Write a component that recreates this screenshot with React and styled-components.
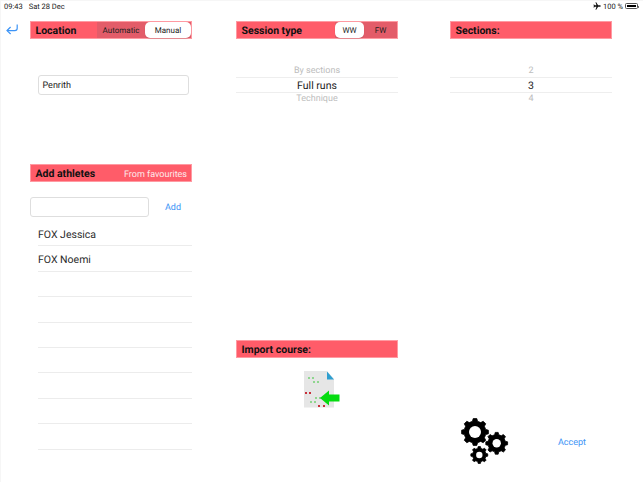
import React from "react";
import styled, { createGlobalStyle } from "styled-components";

const GlobalStyle = createGlobalStyle`
  html, body {
    margin: 0;
    padding: 0;
    background: #ffffff;
  }
  * {
    box-sizing: border-box;
  }
`;

const athletes = ["FOX Jessica", "FOX Noemi", "", "", "", "", "", "", ""];

const greenDots = [[4, 6], [8, 6], [9, 10], [13, 10], [11, 26], [15, 26], [6, 30], [10, 30]];
const redDots = [[1, 21], [5, 21], [14, 34], [19, 34]];

// teeth are computed, so the three gears can share one drawing
function gearPath(cx, cy, outer, inner, teeth) {
  const step = (Math.PI * 2) / teeth;
  let d = "";
  for (let i = 0; i < teeth; i++) {
    const a = i * step - Math.PI / 2;
    const pts = [
      [inner, a - step * 0.3],
      [outer, a - step * 0.17],
      [outer, a + step * 0.17],
      [inner, a + step * 0.3],
    ];
    pts.forEach(([r, t], j) => {
      const x = (cx + r * Math.cos(t)).toFixed(2);
      const y = (cy + r * Math.sin(t)).toFixed(2);
      d += (i === 0 && j === 0 ? "M" : "L") + x + " " + y + " ";
    });
  }
  return d + "Z";
}

function Gear({ cx, cy, outer, inner, hole }) {
  return (
    <>
      <path d={gearPath(cx, cy, outer, inner, 8)} fill="#000" stroke="#000" strokeWidth="0.8" strokeLinejoin="round" />
      <circle cx={cx} cy={cy} r={hole} fill="#fff" />
    </>
  );
}

function Gears() {
  return (
    <GearsSvg width="50" height="50" viewBox="0 0 50 50">
      <Gear cx={15} cy={15} outer={13.5} inner={11} hole={6} />
      <Gear cx={36.7} cy={26.3} outer={11} inner={8.8} hole={4.2} />
      <Gear cx={19.3} cy={38} outer={8.5} inner={6.8} hole={3.2} />
    </GearsSvg>
  );
}

function FileImport() {
  return (
    <svg width="36" height="38" viewBox="0 0 36 38">
      <path d="M0 0H23L30 8V36.5H0Z" fill="#e6e6e6" />
      <path d="M23 0.5L30 8.5H23Z" fill="#2f9fd0" />
      {greenDots.map(([x, y]) => (
        <rect key={x + "-" + y} x={x} y={y} width="2" height="2" fill="#8fd68f" />
      ))}
      {redDots.map(([x, y]) => (
        <rect key={x + "-" + y} x={x} y={y} width="2" height="2" fill="#c8303a" />
      ))}
      <path d="M16 27L25 19.5V23.5H35.5V30.5H25V34.5Z" fill="#05dc10" />
    </svg>
  );
}

function BackArrow() {
  return (
    <svg width="12" height="11" viewBox="0 0 12 11" fill="none" stroke="#3d94f6" strokeWidth="1.2">
      <path d="M11.2 0.5V4.2C11.2 5.8 10.2 6.6 8.8 6.6H1.2" />
      <path d="M4.6 3L1 6.6L4.6 10" />
    </svg>
  );
}

function Plane() {
  return (
    <svg width="8" height="8" viewBox="0 0 10 10">
      <path d="M9.8 5C9.8 4.5 9.2 4.2 8.7 4.2H6.4L4 .4H3.1L4.3 4.2H2.3L1.4 3.1H.6L1.1 5L.6 6.9H1.4L2.3 5.8H4.3L3.1 9.6H4L6.4 5.8H8.7C9.2 5.8 9.8 5.5 9.8 5Z" fill="#111" />
    </svg>
  );
}

export default function App() {
  return (
    <>
      <GlobalStyle />
      <Screen>
        <StatusBar>
          <StatusGroup>
            <span>09:43</span>
            <span>Sat 28 Dec</span>
          </StatusGroup>
          <StatusGroup>
            <Plane />
            <span>100 %</span>
            <Battery>
              <BatteryFill />
            </Battery>
          </StatusGroup>
        </StatusBar>

        <BackButton>
          <BackArrow />
        </BackButton>

        <Columns>
          <Column>
            <HeaderBar>
              <HeaderTitle>Location</HeaderTitle>
              <Segments>
                <Segment $width="48px">Automatic</Segment>
                <Segment $width="46px" $selected>Manual</Segment>
              </Segments>
            </HeaderBar>
            <LocationBox>Penrith</LocationBox>

            <AthletesBar>
              <HeaderTitle>Add athletes</HeaderTitle>
              <Favourites>From favourites</Favourites>
            </AthletesBar>
            <AddRow>
              <AthleteInput />
              <LinkText>Add</LinkText>
            </AddRow>
            <AthleteList>
              {athletes.map((name, i) => (
                <AthleteRow key={i}>{name}</AthleteRow>
              ))}
            </AthleteList>
          </Column>

          <Column>
            <HeaderBar>
              <HeaderTitle>Session type</HeaderTitle>
              <Segments>
                <Segment $width="29px" $selected>WW</Segment>
                <Segment $width="33px">FW</Segment>
              </Segments>
            </HeaderBar>
            <Picker>
              <PickerFaded>By sections</PickerFaded>
              <PickerCurrent>Full runs</PickerCurrent>
              <PickerFaded>Technique</PickerFaded>
            </Picker>
            <ImportBlock>
              <HeaderBar>
                <HeaderTitle>Import course:</HeaderTitle>
              </HeaderBar>
              <ImportIcon>
                <FileImport />
              </ImportIcon>
            </ImportBlock>
          </Column>

          <Column>
            <HeaderBar>
              <HeaderTitle>Sections:</HeaderTitle>
            </HeaderBar>
            <Picker>
              <PickerFaded>2</PickerFaded>
              <PickerCurrent>3</PickerCurrent>
              <PickerFaded>4</PickerFaded>
            </Picker>
            <Actions>
              <Gears />
              <LinkText>Accept</LinkText>
            </Actions>
          </Column>
        </Columns>
      </Screen>
    </>
  );
}

const Screen = styled.div`
  position: relative;
  width: 643px;
  height: 482px;
  overflow: hidden;
  background: #ffffff;
  box-shadow: inset 1px 1px 0 #f6f6f6;
  font-family: Roboto, "Liberation Sans", sans-serif;
  text-rendering: geometricPrecision;
  color: #1a1a1a;
`;

const StatusBar = styled.div`
  display: flex;
  justify-content: space-between;
  align-items: center;
  height: 12px;
  padding: 0 5px 0 4px;
  font-size: 7.5px;
  color: #222222;
`;

const StatusGroup = styled.div`
  display: flex;
  align-items: center;
  gap: 6px;
  &:last-child {
    gap: 2px;
  }
`;

const Battery = styled.div`
  position: relative;
  width: 13px;
  height: 6px;
  padding: 1px;
  border: 0.5px solid #555555;
  border-radius: 1.5px;
  &::after {
    content: "";
    position: absolute;
    right: -2px;
    top: 1.5px;
    width: 1px;
    height: 2px;
    background: #777777;
  }
`;

const BatteryFill = styled.div`
  height: 100%;
  background: #000000;
`;

const BackButton = styled.div`
  position: absolute;
  left: 6px;
  top: 24px;
  display: flex;
`;

const Columns = styled.div`
  display: flex;
  height: 470px;
  padding: 9px 0 0 30px;
`;

const Column = styled.div`
  display: flex;
  flex-direction: column;
  flex: none;
  width: 162px;
  height: 100%;
  margin-right: 44px;
  &:nth-child(2) {
    margin-right: 52px;
  }
`;

const HeaderBar = styled.div`
  display: flex;
  justify-content: space-between;
  align-items: center;
  flex: none;
  height: 18px;
  padding-left: 4.5px;
  background: #ff5c69;
  border: 0.5px solid #ff9aa2;
`;

const AthletesBar = styled(HeaderBar)`
  margin-top: 69px;
`;

const HeaderTitle = styled.div`
  font-size: 10.5px;
  font-weight: 700;
  color: #111111;
`;

const Segments = styled.div`
  display: flex;
  height: 100%;
  background: #e35c69;
`;

const Segment = styled.div`
  display: flex;
  align-items: center;
  justify-content: center;
  width: ${(p) => p.$width};
  font-size: 8px;
  color: #222222;
  background: ${(p) => (p.$selected ? "#ffffff" : "transparent")};
  border-radius: ${(p) => (p.$selected ? "5px" : "0")};
  box-shadow: ${(p) => (p.$selected ? "0 1px 1px rgba(0, 0, 0, 0.12)" : "none")};
`;

const Favourites = styled.div`
  padding-right: 4px;
  padding-top: 3px;
  font-size: 9px;
  color: #fde8ea;
`;

const LocationBox = styled.div`
  display: flex;
  align-items: center;
  flex: none;
  width: 151px;
  height: 20px;
  margin: 36px 0 0 7.5px;
  padding: 1px 0 0 4px;
  font-size: 9px;
  border: 1px solid #dedede;
  border-radius: 3px;
`;

const AddRow = styled.div`
  display: flex;
  align-items: center;
  flex: none;
  margin-top: 15px;
`;

const AthleteInput = styled.div`
  flex: none;
  width: 119px;
  height: 20px;
  border: 1px solid #dedede;
  border-radius: 3px;
`;

const LinkText = styled.div`
  margin-left: 16px;
  padding-top: 1px;
  font-size: 9px;
  color: #3d94f6;
`;

const AthleteList = styled.div`
  display: flex;
  flex-direction: column;
  flex: none;
  margin: 4px 0 0 8px;
`;

const AthleteRow = styled.div`
  display: flex;
  align-items: center;
  flex: none;
  height: 25.4px;
  padding-top: 2px;
  font-size: 10.5px;
  color: #2a2a2a;
  border-bottom: 1px solid #ececec;
`;

const Picker = styled.div`
  display: flex;
  flex-direction: column;
  flex: none;
  margin-top: 25px;
  text-align: center;
`;

const PickerFaded = styled.div`
  height: 13px;
  line-height: 13px;
  font-size: 9px;
  color: #bdbdbd;
  &:first-child {
    padding-top: 1px;
  }
`;

const PickerCurrent = styled.div`
  height: 16px;
  line-height: 15px;
  font-size: 10.5px;
  color: #222222;
  border-top: 1px solid #eeeeee;
  border-bottom: 1px solid #eeeeee;
`;

const ImportBlock = styled.div`
  display: flex;
  flex-direction: column;
  flex: none;
  margin-top: 234px;
`;

const ImportIcon = styled.div`
  display: flex;
  justify-content: center;
  margin-top: 13px;
  padding-left: 10px;
`;

const Actions = styled.div`
  display: flex;
  align-items: center;
  flex: none;
  margin-top: 311px;
  padding-left: 10px;
`;

const GearsSvg = styled.svg`
  flex: none;
  margin-right: 32px;
`;
